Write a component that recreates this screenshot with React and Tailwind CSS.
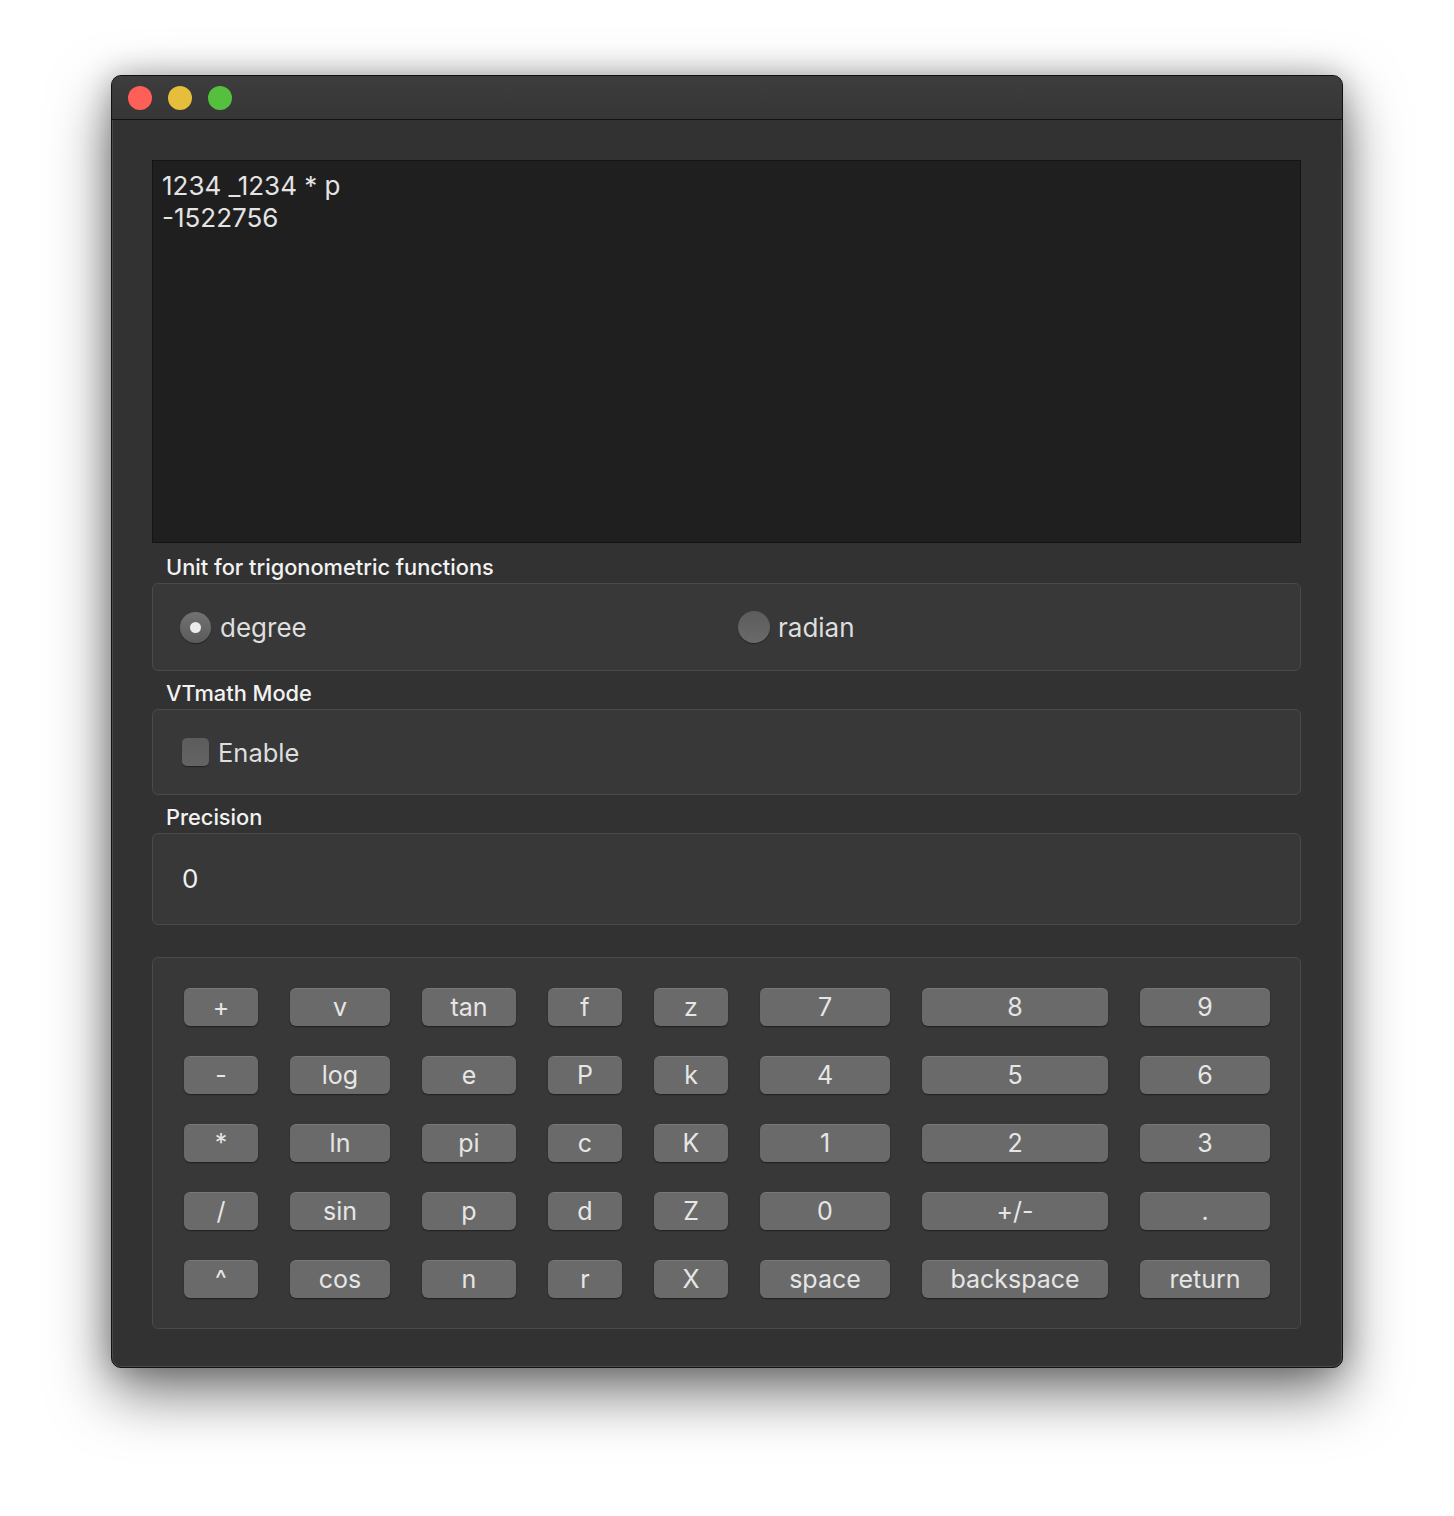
import React from "react";

const rows = [
  ["+", "v", "tan", "f", "z", "7", "8", "9"],
  ["-", "log", "e", "P", "k", "4", "5", "6"],
  ["*", "ln", "pi", "c", "K", "1", "2", "3"],
  ["/", "sin", "p", "d", "Z", "0", "+/-", "."],
  ["^", "cos", "n", "r", "X", "space", "backspace", "return"],
];

function Key({ label }) {
  return (
    <div className="h-[38px] flex items-center justify-center rounded-[6px] bg-[#6a6a6a] border-t border-t-[#787878] shadow-[0_1px_1.5px_rgba(0,0,0,0.45)] text-[25px] leading-none text-[#e6e6e6] pb-[1px]">
      {label}
    </div>
  );
}

function Label({ children, first }) {
  return (
    <div className={`${first ? "mt-[12px]" : "mt-[10px]"} mb-[4px] h-[24px] pl-[14px] text-[21.8px] leading-[24px] font-medium text-[#f2f2f2]`}>
      {children}
    </div>
  );
}

export default function App() {
  return (
    <div className="w-[1454px] h-[1516px] bg-white pl-[111px] pt-[75px] font-['Inter','Noto_Sans',sans-serif]">
      <div className="w-[1232px] h-[1293px] rounded-[10px] border border-[#111] bg-[#323232] shadow-[0_24px_60px_rgba(0,0,0,0.55),0_0_30px_rgba(0,0,0,0.25),inset_0_0_0_1px_rgba(255,255,255,0.12)] overflow-hidden flex flex-col">
        {/* title bar */}
        <div className="h-[44px] shrink-0 bg-gradient-to-b from-[#3d3d3d] to-[#363636] border-b border-b-[#121212] flex items-center pl-[16px] gap-[16px]">
          <div className="w-[24px] h-[24px] rounded-full bg-[#fe5f57]" />
          <div className="w-[24px] h-[24px] rounded-full bg-[#e5be3c]" />
          <div className="w-[24px] h-[24px] rounded-full bg-[#55c03e]" />
        </div>

        <div className="pt-[40px] pl-[40px] pr-[41px] flex flex-col">
          {/* display */}
          <div className="h-[383px] bg-[#1f1f1f] border border-[#141414] pl-[9px] pt-[9px] text-[26px] leading-[32px] text-[#e4e4e4]">
            <div>1234 _1234 * p</div>
            <div>-1522756</div>
          </div>

          <Label first>Unit for trigonometric functions</Label>
          <div className="h-[88px] rounded-[6px] bg-[#383838] border border-[#4a4a4a] flex items-center pl-[27px]">
            <div className="flex items-center w-[558px]">
              <div className="w-[31px] h-[31px] rounded-full bg-gradient-to-b from-[#727272] to-[#5b5b5b] shadow-[0_1px_1px_rgba(0,0,0,0.4)] flex items-center justify-center">
                <div className="w-[11px] h-[11px] rounded-full bg-[#ececec]" />
              </div>
              <span className="ml-[9px] text-[26px] text-[#dedede] leading-none pt-[1px]">degree</span>
            </div>
            <div className="flex items-center">
              <div className="w-[32px] h-[32px] rounded-full bg-gradient-to-b from-[#5c5c5c] to-[#6a6a6a] shadow-[0_1px_1px_rgba(0,0,0,0.4)]" />
              <span className="ml-[8px] text-[26px] text-[#dedede] leading-none pt-[1px]">radian</span>
            </div>
          </div>

          <Label>VTmath Mode</Label>
          <div className="h-[86px] rounded-[6px] bg-[#383838] border border-[#4a4a4a] flex items-center pl-[29px]">
            <div className="w-[27px] h-[28px] rounded-[5px] bg-gradient-to-b from-[#5c5c5c] to-[#646464] shadow-[0_1px_1px_rgba(0,0,0,0.4)]" />
            <span className="ml-[9px] text-[25.5px] text-[#dedede] leading-none pt-[1px]">Enable</span>
          </div>

          <Label>Precision</Label>
          <div className="h-[92px] rounded-[6px] bg-[#383838] border border-[#4a4a4a] flex items-center pl-[29px]">
            <span className="text-[26px] text-[#f0f0f0] leading-none">0</span>
          </div>

          {/* keypad */}
          <div className="mt-[32px] h-[372px] rounded-[6px] bg-[#383838] border border-[#4a4a4a] pl-[31px] pt-[30px]">
            <div className="grid grid-cols-[74px_100px_94px_74px_74px_130px_186px_130px] gap-x-[32px] gap-y-[30px]">
              {rows.flat().map((k, i) => (
                <Key key={i} label={k} />
              ))}
            </div>
          </div>
        </div>
      </div>
    </div>
  );
}
